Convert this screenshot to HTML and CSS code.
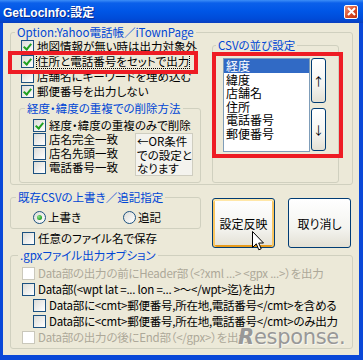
FILE: index.html
```html
<!DOCTYPE html>
<html lang="ja">
<head>
  <meta charset="UTF-8">
  <title>GetLocInfo:設定</title>
  <link rel="stylesheet" href="styles.css">
</head>
<body>
  <div class="window">
    <div class="titlebar">
      <span class="title">GetLocInfo:設定</span>
      <span class="close">
        <svg width="9" height="9" viewBox="0 0 9 9"><path d="M1 1L8 8M8 1L1 8" stroke="#fff" stroke-width="2"/></svg>
      </span>
    </div>

    <div class="client">
      <fieldset class="group option">
        <legend>Option:Yahoo電話帳／iTownPage</legend>
        <div class="option-body">
          <div class="left-col">
            <label class="check"><span class="box on"></span><span>地図情報が無い時は出力対象外</span></label>
            <label class="check"><span class="box on"></span><span class="focus">住所と電話番号をセットで出力</span></label>
            <label class="check"><span class="box"></span><span>店舗名にキーワードを埋め込む</span></label>
            <label class="check"><span class="box on"></span><span>郵便番号を出力しない</span></label>

            <fieldset class="group dedupe">
              <legend>経度・緯度の重複での削除方法</legend>
              <div class="dedupe-body">
                <label class="check row14"><span class="box on"></span><span>経度・緯度の重複のみで削除</span></label>
                <div class="or-row">
                  <div>
                    <label class="check row14"><span class="box"></span><span>店名完全一致</span></label>
                    <label class="check row14"><span class="box"></span><span>店名先頭一致</span></label>
                    <label class="check row14"><span class="box"></span><span>電話番号一致</span></label>
                  </div>
                  <div class="note">
                    <div>←OR条件</div>
                    <div>での設定と</div>
                    <div>なります</div>
                  </div>
                </div>
              </div>
            </fieldset>
          </div>

          <fieldset class="group csv">
            <legend>CSVの並び設定</legend>
            <div class="csv-body">
              <ul class="listbox">
                <li class="sel">経度</li>
                <li>緯度</li>
                <li>店舗名</li>
                <li>住所</li>
                <li>電話番号</li>
                <li>郵便番号</li>
              </ul>
              <div class="move">
                <button class="xp up">↑</button>
                <button class="xp down">↓</button>
              </div>
            </div>
          </fieldset>
        </div>
      </fieldset>

      <div class="middle">
        <div class="mid-left">
          <fieldset class="group overwrite">
            <legend>既存CSVの上書き／追記指定</legend>
            <div class="radios">
              <label class="radio first"><span class="dot on"></span><span>上書き</span></label>
              <label class="radio"><span class="dot"></span><span>追記</span></label>
            </div>
          </fieldset>
          <label class="check anyname"><span class="box"></span><span>任意のファイル名で保存</span></label>
        </div>
        <div class="actions">
          <button class="xp big hot">設定反映</button>
          <button class="xp big">取り消し</button>
        </div>
      </div>

      <fieldset class="group gpx">
        <legend>.gpxファイル出力オプション</legend>
        <div class="gpx-body">
          <label class="check row16 off"><span class="box"></span><span>Data部の出力の前にHeader部（&lt;?xml ...&gt; &lt;gpx ...&gt;）を出力</span></label>
          <label class="check row16"><span class="box"></span><span>Data部(&lt;wpt lat =... lon =... &gt;〜&lt;/wpt&gt;迄)を出力</span></label>
          <label class="check row16 sub"><span class="box"></span><span>Data部に&lt;cmt&gt;郵便番号,所在地,電話番号&lt;/cmt&gt;を含める</span></label>
          <label class="check row16 sub"><span class="box"></span><span>Data部に&lt;cmt&gt;郵便番号,所在地,電話番号&lt;/cmt&gt;のみ出力</span></label>
          <label class="check row16 off"><span class="box"></span><span>Data部の出力の後にEnd部（&lt;/gpx&gt;）を出力</span></label>
        </div>
      </fieldset>
    </div>

    <!-- annotations drawn over the dialog -->
    <div class="mark mark-pair"></div>
    <div class="mark mark-list"></div>
    <svg class="cursor" width="12" height="20" viewBox="0 0 12 20">
      <path d="M0.5 0.5V16.5L4.3 12.8L6.8 18.8L9.2 17.8L6.7 12H11.5Z" fill="#fff" stroke="#000" stroke-width="1"/>
    </svg>
    <div class="watermark"><i>R</i>esponse.</div>
  </div>
</body>
</html>
```

FILE: styles.css
```css
* {
  box-sizing: border-box;
}

body {
  margin: 0;
  background: #fff;
  font-family: "Noto Sans CJK JP", sans-serif;
  font-size: 11.5px;
  font-feature-settings: "palt";
  color: #000;
}

.window {
  position: relative;
  width: 363px;
  height: 360px;
  background: #0A48D8;
  display: flex;
  flex-direction: column;
}

.titlebar {
  height: 23px;
  background: linear-gradient(#3D8EF7 0, #0B60EA 3px, #0056E6 11px, #004BD8 19px, #0A3EBE 23px);
  display: flex;
  align-items: center;
  padding: 0 5px 0 3px;
}

.title {
  flex: 1;
  color: #fff;
  font: bold 12px "Liberation Sans", "Noto Sans CJK JP", sans-serif;
  text-shadow: 1px 1px 0 #0B2A8C;
}

.close {
  width: 14px;
  height: 14px;
  border: 1px solid #fff;
  border-radius: 2px;
  background: linear-gradient(135deg, #F0957A, #DA4A26 55%, #C0330F);
  display: flex;
  align-items: center;
  justify-content: center;
}

.client {
  height: 332px;
  margin: 0 4px 5px 3px;
  background: #ECE9D8;
  padding: 2px 0 0 7px;
}

/* group boxes */
.group {
  margin: 0;
  padding: 0;
  border: 1px solid #D0D0BF;
  border-radius: 3px;
  min-width: 0;
}

.group legend {
  padding: 0 2px;
  line-height: 14px;
  color: #0046D5;
}

.option {
  width: 343px;
  height: 160px;
}

.option legend {
  margin-left: 4px;
}

.option-body {
  display: flex;
  padding-left: 10px;
}

.left-col {
  width: 179px;
}

/* checkboxes */
.check {
  display: flex;
  align-items: center;
  height: 15px;
  line-height: 15px;
  white-space: nowrap;
}

.check.row14 {
  height: 14px;
}

.check.row16 {
  height: 16px;
  letter-spacing: -0.25px;
}

.box {
  flex: none;
  position: relative;
  width: 13px;
  height: 13px;
  margin-right: 3px;
  border: 1px solid #1C5180;
  background: linear-gradient(135deg, #DCDCD7, #fff);
}

.box.on::after {
  content: "";
  position: absolute;
  left: 3px;
  top: 1px;
  width: 3px;
  height: 6px;
  border: solid #21A121;
  border-width: 0 2px 2px 0;
  transform: rotate(40deg);
}

.check.off {
  color: #ACA899;
}

.check.off .box {
  border-color: #CAC8BB;
  background: #fff;
}

.focus {
  outline: 1px dotted #000;
  line-height: 13px;
}

/* dedupe group */
.dedupe {
  width: 182px;
  height: 82px;
  margin: 2px 0 0 -2px;
}

.dedupe legend {
  margin-left: 5px;
}

.dedupe-body {
  padding: 3px 0 0 13px;
}

.or-row {
  display: flex;
}

.note {
  width: 58px;
  height: 43px;
  margin: 1px 7px 0 auto;
  padding: 1px 0 0 1px;
  border: 1px solid #CFCDC0;
  background: #F4F3EE;
  white-space: nowrap;
}

.note div {
  height: 13.5px;
  line-height: 13.5px;
}

/* CSV order group */
.csv {
  width: 127px;
  height: 145px;
  margin: -1px 0 0 12px;
}

.csv legend {
  margin-left: 3px;
}

.csv-body {
  display: flex;
  padding: 6px 0 0 10px;
}

.listbox {
  width: 87px;
  height: 94px;
  margin: 0;
  padding: 0;
  list-style: none;
  background: #fff;
  border: 1px solid #7F9DB9;
  font-size: 12px;
}

.listbox li {
  height: 13.6px;
  line-height: 13.6px;
  padding-left: 2px;
}

.listbox li.sel {
  background: #316AC5;
  color: #fff;
}

.move {
  display: flex;
  flex-direction: column;
  justify-content: space-between;
  width: 15px;
  height: 93px;
  margin-left: 1px;
}

/* XP buttons */
.xp {
  font: inherit;
  font-feature-settings: "palt";
  color: #000;
  padding: 0;
  border: 1px solid #003C74;
  border-radius: 3px;
  background: linear-gradient(#FFFFFF, #F4F4F0 60%, #E3E0D4);
}

.up {
  height: 45px;
}

.down {
  height: 43px;
}

.middle {
  display: flex;
  margin-top: 5px;
}

.mid-left {
  width: 191px;
}

.overwrite {
  height: 39px;
}

.overwrite legend {
  margin-left: 5px;
}

.radios {
  display: flex;
  padding: 6px 0 0 22px;
}

.radio {
  display: flex;
  align-items: center;
  height: 14px;
}

.radio.first {
  width: 90px;
}

.dot {
  position: relative;
  width: 13px;
  height: 13px;
  margin-right: 2px;
  border: 1px solid #1C5180;
  border-radius: 50%;
  background: linear-gradient(135deg, #DCDCD7, #fff);
}

.dot.on::after {
  content: "";
  position: absolute;
  left: 3px;
  top: 3px;
  width: 5px;
  height: 5px;
  border-radius: 50%;
  background: radial-gradient(circle at 35% 35%, #8CE08C, #21A121 70%);
}

.anyname {
  margin: 2px 0 0 12px;
}

.actions {
  display: flex;
  gap: 13px;
  margin: 8px 0 0 11px;
}

.xp.big {
  width: 63px;
  height: 50px;
  font-size: 12px;
}

.xp.hot {
  box-shadow: inset 0 2px 0 #FFE7A8, inset 2px 0 0 #F9C662, inset -2px 0 0 #F9C662, inset 0 -2px 0 #E59A1C;
}

/* gpx group */
.gpx {
  width: 343px;
  height: 101px;
}

.gpx legend {
  margin-left: 7px;
}

.gpx-body {
  padding: 3px 0 0 11px;
}

.check.sub {
  margin-left: 11px;
}

/* overlays */
.mark {
  position: absolute;
  border: 4px solid #EE1C24;
}

.mark-pair {
  left: 8px;
  top: 51px;
  width: 190px;
  height: 23px;
}

.mark-list {
  left: 212px;
  top: 52px;
  width: 131px;
  height: 106px;
}

.cursor {
  position: absolute;
  left: 252px;
  top: 231px;
}

.watermark {
  position: absolute;
  left: 238px;
  top: 325px;
  font: 21px "DejaVu Sans", sans-serif;
  color: #989898;
  letter-spacing: -0.3px;
  text-shadow: 1px 1px 0 rgba(255, 255, 255, 0.6);
}

.watermark i {
  font-weight: bold;
}
```
